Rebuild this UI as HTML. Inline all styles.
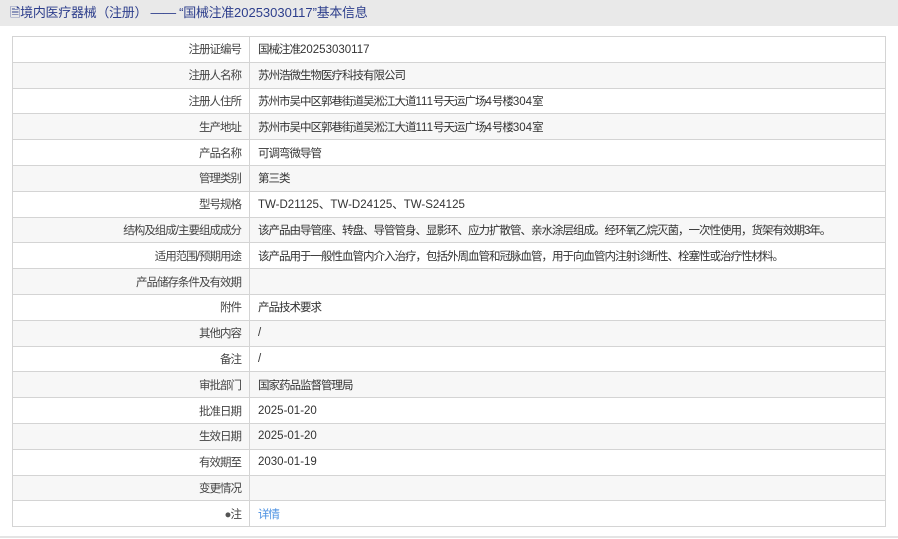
<!DOCTYPE html>
<html><head><meta charset="utf-8"><style>
body{margin:0;width:898px;height:539px;background:#fff;font-family:"Liberation Sans","Noto Sans CJK SC",sans-serif;overflow:hidden;position:relative}
.hd{position:absolute;left:0;top:0;width:898px;height:26px;background:#e9e9e9;color:#2d3e8c;font-size:13px;line-height:26px;padding-left:10px;box-sizing:border-box;letter-spacing:-0.3px}
table{position:absolute;left:12px;top:36px;width:874px;border-collapse:collapse;font-size:11.5px;color:#333;table-layout:fixed;letter-spacing:-1px}
td{border:1px solid #d4d4d4;height:24.8px;padding:0 8px;white-space:nowrap;overflow:hidden}
td.l{text-align:right;color:#444}
tr:nth-child(even){background:#f7f7f7}
.n{letter-spacing:0}
.bl{position:absolute;left:0;top:536px;width:898px;height:2px;background:#e4e4e4}
a{color:#4a90e2;text-decoration:none}
</style></head><body>
<div class="hd">🗎境内医疗器械（注册） —— “国械注准<span style="letter-spacing:0">20253030117</span>”基本信息</div>
<table>
<colgroup><col style="width:237px"><col></colgroup>
<tr><td class="l">注册证编号</td><td>国械注准<span class="n">20253030117</span></td></tr>
<tr><td class="l">注册人名称</td><td>苏州浩微生物医疗科技有限公司</td></tr>
<tr><td class="l">注册人住所</td><td>苏州市吴中区郭巷街道吴淞江大道<span class="n">111</span>号天运广场<span class="n">4</span>号楼<span class="n">304</span>室</td></tr>
<tr><td class="l">生产地址</td><td>苏州市吴中区郭巷街道吴淞江大道<span class="n">111</span>号天运广场<span class="n">4</span>号楼<span class="n">304</span>室</td></tr>
<tr><td class="l">产品名称</td><td>可调弯微导管</td></tr>
<tr><td class="l">管理类别</td><td>第三类</td></tr>
<tr><td class="l">型号规格</td><td class="n">TW-D21125、TW-D24125、TW-S24125</td></tr>
<tr><td class="l">结构及组成/主要组成成分</td><td>该产品由导管座、转盘、导管管身、显影环、应力扩散管、亲水涂层组成。经环氧乙烷灭菌，一次性使用，货架有效期3年。</td></tr>
<tr><td class="l">适用范围/预期用途</td><td>该产品用于一般性血管内介入治疗，包括外周血管和冠脉血管，用于向血管内注射诊断性、栓塞性或治疗性材料。</td></tr>
<tr><td class="l">产品储存条件及有效期</td><td></td></tr>
<tr><td class="l">附件</td><td>产品技术要求</td></tr>
<tr><td class="l">其他内容</td><td>/</td></tr>
<tr><td class="l">备注</td><td>/</td></tr>
<tr><td class="l">审批部门</td><td>国家药品监督管理局</td></tr>
<tr><td class="l">批准日期</td><td class="n">2025-01-20</td></tr>
<tr><td class="l">生效日期</td><td class="n">2025-01-20</td></tr>
<tr><td class="l">有效期至</td><td class="n">2030-01-19</td></tr>
<tr><td class="l">变更情况</td><td></td></tr>
<tr><td class="l"><span style="color:#555">●</span>注</td><td><a>详情</a></td></tr>
</table>
<div class="bl"></div>
</body></html>
